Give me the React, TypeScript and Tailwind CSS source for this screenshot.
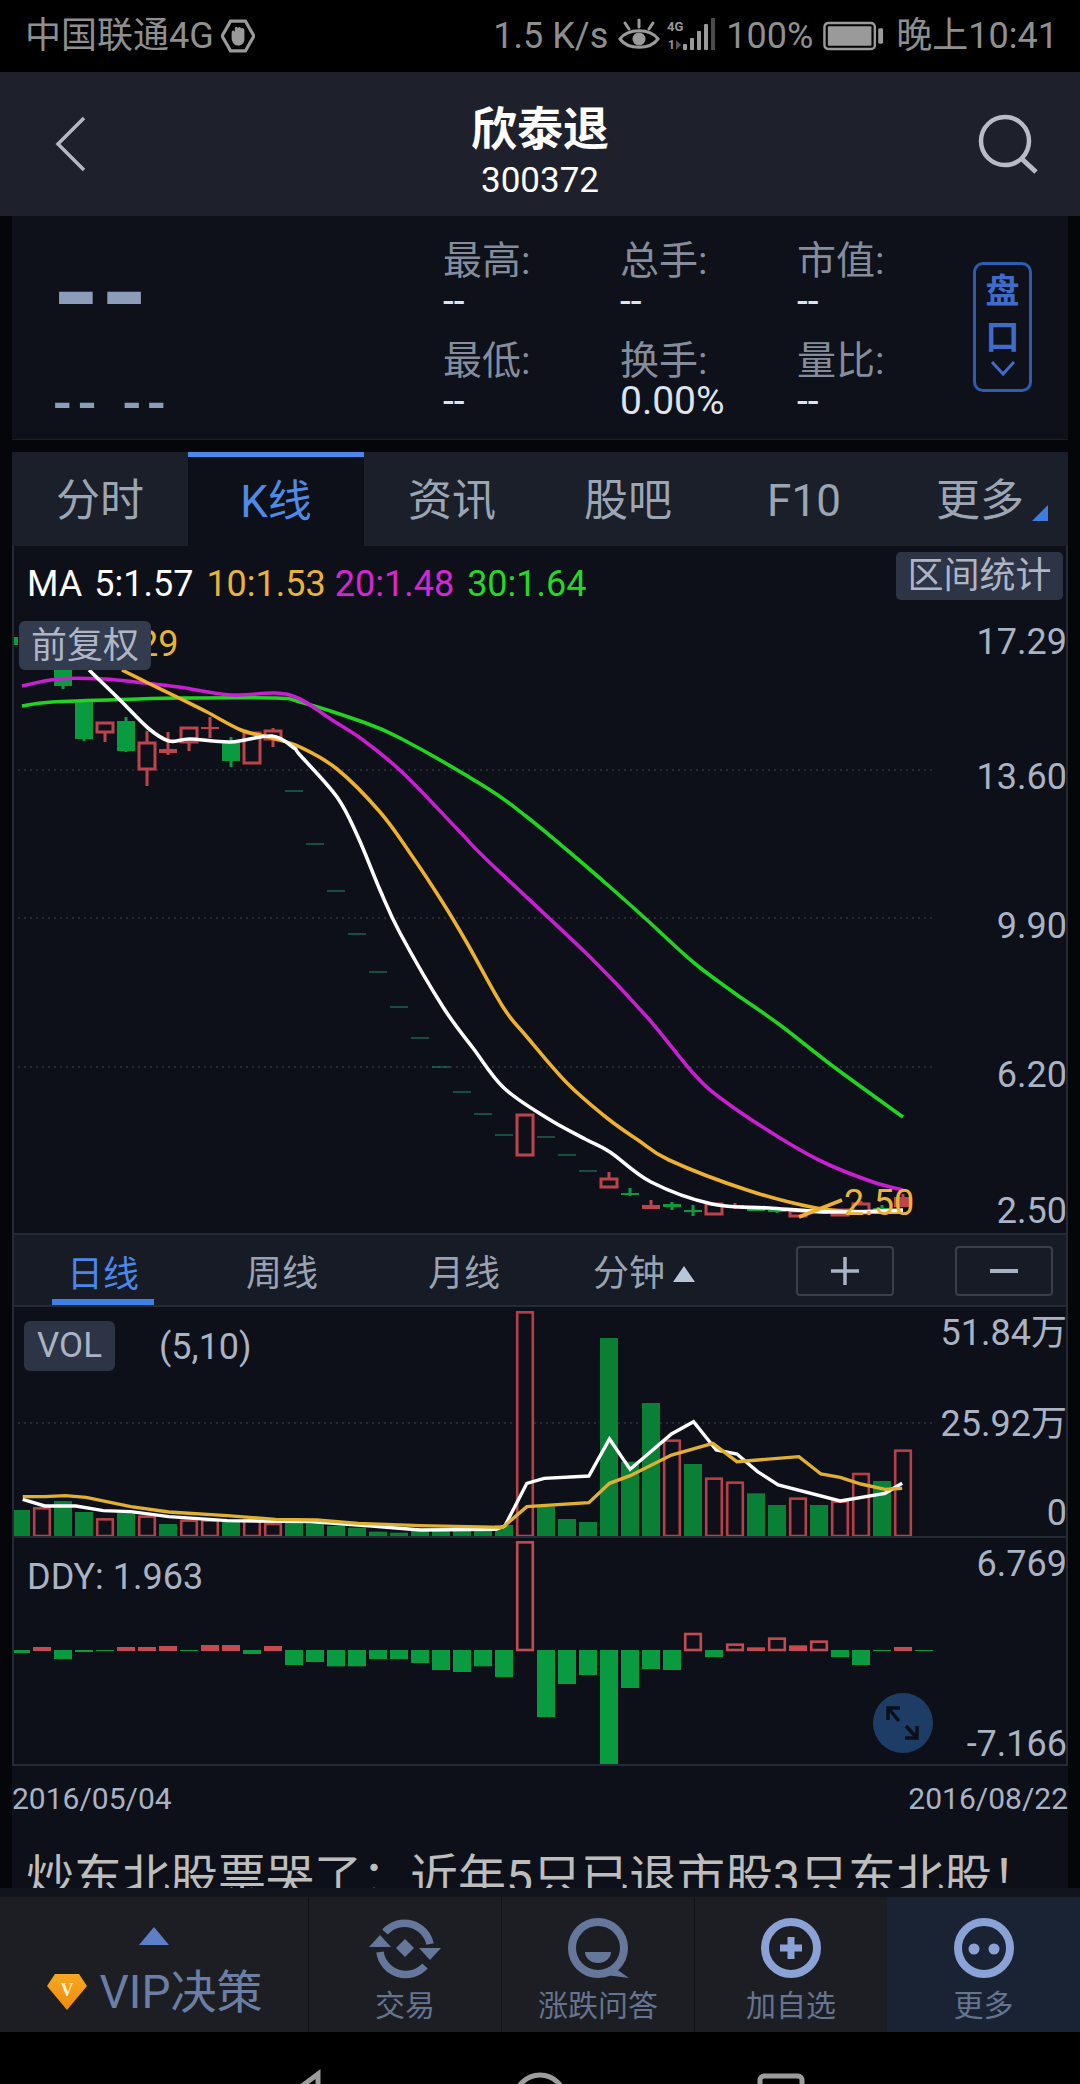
import React from "react";

type Candle = [number, number, number, number, number, "r" | "g", boolean?];

const candles: Candle[] = [
  [63, 670, 686, 670, 689, "g"],
  [84, 702, 739, 702, 741, "g"],
  [105, 723, 732, 723, 742, "r", true],
  [126, 721, 751, 717, 752, "g"],
  [147, 743, 769, 731, 786, "r", true],
  [168, 749, 753, 732, 755, "r"],
  [189, 728, 742, 728, 751, "r", true],
  [210, 727, 729, 717, 738, "r"],
  [231, 742, 761, 737, 767, "g"],
  [252, 733, 763, 733, 763, "r", true],
  [273, 731, 739, 728, 747, "r", true],
  [525, 1115, 1155, 1115, 1155, "r", true],
  [609, 1179, 1187, 1172, 1187, "r", true],
  [630, 1193, 1195, 1188, 1196, "g"],
  [651, 1205, 1209, 1200, 1209, "r"],
  [672, 1204, 1207, 1202, 1210, "g"],
  [693, 1210, 1211, 1205, 1216, "g"],
  [714, 1204, 1214, 1204, 1214, "r", true],
  [735, 1205, 1208, 1203, 1209, "r"],
  [756, 1207, 1211, 1206, 1211, "g"],
  [777, 1210, 1212, 1209, 1213, "g"],
  [798, 1211, 1216, 1211, 1217, "r", true],
  [819, 1210, 1214, 1209, 1214, "g"],
  [840, 1210, 1215, 1210, 1215, "r", true],
  [861, 1204, 1213, 1201, 1213, "r", true],
  [882, 1208, 1210, 1205, 1212, "g"],
  [903, 1197, 1207, 1194, 1207, "r"],
];

const dashes: [number, number][] = [
  [294, 791], [315, 844], [336, 891], [357, 934], [378, 972], [399, 1007], [420, 1038],
  [441, 1067], [462, 1092], [483, 1114], [504, 1135], [546, 1137], [567, 1155], [588, 1171],
];

const white: [number, number][] = [
  [89, 670], [120, 700], [148, 728], [169, 741], [190, 739], [231, 742], [272, 736], [294, 748],
  [300, 755], [337, 797], [358, 837], [380, 890], [400, 933], [443, 1007], [473, 1048], [504, 1088],
  [547, 1118], [585, 1139], [610, 1152], [651, 1182], [712, 1204], [769, 1208], [834, 1212], [903, 1210],
];
const yellow: [number, number][] = [
  [122, 670], [148, 683], [179, 698], [207, 712], [241, 730], [272, 738], [300, 747], [337, 769],
  [380, 812], [410, 853], [443, 903], [467, 943], [503, 1007], [527, 1037], [567, 1083], [607, 1118],
  [638, 1140], [669, 1160], [747, 1190], [816, 1208], [864, 1212], [903, 1212],
];
const magenta: [number, number][] = [
  [22, 686], [58, 679], [103, 679], [145, 683], [179, 687], [231, 695], [275, 693], [300, 699],
  [332, 720], [363, 740], [403, 773], [460, 832], [487, 860], [590, 957], [647, 1017], [693, 1073],
  [723, 1100], [780, 1138], [825, 1163], [873, 1182], [903, 1190],
];
const green: [number, number][] = [
  [22, 706], [52, 702], [138, 699], [179, 698], [275, 698], [300, 702], [357, 720], [400, 738],
  [487, 788], [527, 817], [567, 850], [610, 887], [647, 920], [693, 962], [733, 992], [780, 1025],
  [834, 1067], [903, 1117],
];

function smooth(p: [number, number][]) {
  let d = `M${p[0][0]} ${p[0][1]}`;
  for (let i = 0; i < p.length - 1; i++) {
    const a = p[Math.max(i - 1, 0)];
    const b = p[i];
    const c = p[i + 1];
    const e = p[Math.min(i + 2, p.length - 1)];
    d += ` C${b[0] + (c[0] - a[0]) / 6} ${b[1] + (c[1] - a[1]) / 6} ${c[0] - (e[0] - b[0]) / 6} ${c[1] - (e[1] - b[1]) / 6} ${c[0]} ${c[1]}`;
  }
  return d;
}

const RED = "#bd434c";
const GRN = "#0a9a3f";

function KChart() {
  return (
    <svg viewBox="14 546 1052 687" className="absolute inset-0 h-full w-full">
      {[770, 918, 1067].map((y) => (
        <line key={y} x1="18" x2="933" y1={y} y2={y} stroke="#2f3440" strokeWidth="1.5" strokeDasharray="2 4" />
      ))}
      <rect x="12" y="637" width="6" height="8" fill={GRN} />
      {dashes.map(([x, y]) => (
        <line key={x} x1={x - 9} x2={x + 9} y1={y} y2={y} stroke="#1f7a5c" strokeWidth="1.2" />
      ))}
      {candles.map(([x, t, b, wt, wb, c, hollow]) => {
        const col = c === "r" ? RED : GRN;
        return (
          <g key={x}>
            <line x1={x} x2={x} y1={wt} y2={wb} stroke={col} strokeWidth="3" />
            {hollow ? (
              <rect x={x - 8} y={t} width="16" height={b - t} fill="#0d1018" stroke={col} strokeWidth="3" />
            ) : (
              <rect x={x - 9} y={t} width="18" height={Math.max(b - t, 2)} fill={col} />
            )}
          </g>
        );
      })}
      <path d={smooth(green)} fill="none" stroke="#22d322" strokeWidth="3.6" />
      <path d={smooth(magenta)} fill="none" stroke="#c81fd0" strokeWidth="3.6" />
      <path d={smooth(yellow)} fill="none" stroke="#eeb12f" strokeWidth="3.6" />
      <path d={smooth(white)} fill="none" stroke="#ffffff" strokeWidth="3.6" />
      <line x1="799" y1="1217" x2="842" y2="1200" stroke="#eeb12f" strokeWidth="3.6" />
    </svg>
  );
}

const volTops: [number, "r" | "g"][] = [
  [840, "g"], [835, "r"], [813, "g"], [846, "g"], [868, "r"], [848, "g"], [860, "r"], [882, "g"],
  [872, "r"], [872, "r"], [875, "g"], [870, "r"], [882, "r"], [875, "g"], [880, "g"], [888, "g"],
  [893, "g"], [905, "g"], [908, "g"], [900, "g"], [900, "g"], [900, "g"], [895, "g"], [885, "g"],
  [247, "r"], [830, "g"], [867, "g"], [876, "g"], [324, "g"], [695, "g"], [519, "g"], [632, "r"],
  [702, "g"], [746, "r"], [758, "r"], [790, "g"], [825, "g"], [806, "r"], [825, "g"], [815, "r"],
  [732, "r"], [753, "g"], [662, "r"],
];
const volWhite = [
  [33, 808], [65, 828], [110, 828], [150, 842], [190, 845], [245, 860], [330, 872], [450, 875], [540, 888],
  [610, 900], [720, 898], [733, 888], [765, 760], [790, 745], [855, 738], [885, 627], [915, 718], [975, 612],
  [1007, 575], [1040, 660], [1070, 672], [1100, 725], [1130, 765], [1220, 813], [1285, 790], [1310, 760],
];
const volYellow = [
  [33, 800], [65, 800], [95, 797], [125, 802], [190, 830], [245, 846], [330, 857], [400, 868], [460, 870],
  [520, 880], [610, 887], [730, 892], [765, 830], [855, 818], [885, 760], [915, 737], [975, 675], [1035, 640],
  [1070, 695], [1160, 680], [1192, 732], [1220, 742], [1250, 762], [1285, 778], [1310, 775],
];
const toPts = (a: number[][]) => a.map(([x, y]) => `${x / 1.452},${1230 + y / 3}`).join(" ");

function VolChart() {
  return (
    <svg viewBox="14 1307 1052 229" className="absolute inset-0 h-full w-full">
      <line x1="12" x2="933" y1="1423" y2="1423" stroke="#2f3440" strokeWidth="1.5" strokeDasharray="2 4" />
      {volTops.map(([zy, c], i) => {
        const x = 12 + 21 * i;
        const y = 1230 + zy / 3;
        const h = 1536 - y;
        return c === "g" ? (
          <rect key={i} x={x} y={y} width="18" height={h} fill="#0a8036" />
        ) : (
          <rect key={i} x={x + 1.2} y={y} width="15.6" height={h} fill="#0d1018" stroke="#b63f48" strokeWidth="2.6" />
        );
      })}
      <polyline points={toPts(volWhite)} fill="none" stroke="#ffffff" strokeWidth="3.4" />
      <polyline points={toPts(volYellow)} fill="none" stroke="#e0b030" strokeWidth="3.4" />
    </svg>
  );
}

const ddy: [number, "r" | "g" | "rh"][] = [
  [339, "g"], [321, "r"], [357, "g"], [336, "g"], [333, "g"], [321, "r"], [321, "r"], [318, "r"], [332, "g"],
  [315, "r"], [315, "r"], [342, "g"], [318, "r"], [375, "g"], [366, "g"], [379, "g"], [379, "g"], [357, "g"],
  [357, "g"], [369, "g"], [390, "g"], [396, "g"], [379, "g"], [411, "g"], [7, "rh"], [531, "g"], [432, "g"],
  [405, "g"], [675, "g"], [444, "g"], [387, "g"], [390, "g"], [282, "rh"], [351, "g"], [314, "rh"], [322, "r"],
  [296, "rh"], [316, "r"], [305, "rh"], [351, "g"], [375, "g"], [332, "g"], [321, "r"], [332, "g"],
];

function DdyChart() {
  return (
    <svg viewBox="14 1538 1052 226" className="absolute inset-0 h-full w-full">
      {ddy.map(([zy, c], i) => {
        const x = 12 + 21 * i;
        const y = 1540 + zy / 3;
        if (c === "g") {
          const h = Math.max(y - 1650, 1);
          return <rect key={i} x={x} y={1650} width="18" height={h} fill={GRN} />;
        }
        if (c === "r") {
          return <rect key={i} x={x} y={y} width="18" height={1651 - y} fill="#c44a52" />;
        }
        return <rect key={i} x={x + 1.2} y={y} width="15.6" height={1650 - y} fill="#0d1018" stroke="#c44a52" strokeWidth="2.6" />;
      })}
      <circle cx="903" cy="1723" r="30" fill="#1d3d66" />
      <g stroke="#0b0f17" strokeWidth="3.5" fill="none">
        <path d="M889 1709 L899 1721" />
        <path d="M888 1720 V1708 H900" />
        <path d="M916 1737 L906 1726" />
        <path d="M917 1726 V1738 H905" />
      </g>
    </svg>
  );
}

function StatusIcons() {
  return (
    <svg width="104" height="40" viewBox="0 0 104 40" className="shrink-0">
      <g stroke="#9a9a9a" fill="none" strokeWidth="3">
        <path d="M3 23 C11 12 33 12 41 23 C33 34 11 34 3 23 Z" />
        <path d="M22 4 V11 M8 7 L12 13 M36 7 L32 13" strokeLinecap="round" />
      </g>
      <circle cx="22" cy="23" r="6.5" fill="#9a9a9a" />
      <text x="50" y="15" fill="#9a9a9a" fontSize="13" fontWeight="700" fontFamily="Roboto">4G</text>
      <text x="51" y="33" fill="#9a9a9a" fontSize="12" fontWeight="700" fontFamily="Roboto">1</text>
      <path d="M59 24 L64 29 L59 34 Z" fill="#555" />
      <rect x="66" y="28" width="4" height="6" rx="1" fill="#9a9a9a" />
      <rect x="73" y="22" width="4" height="12" rx="1" fill="#9a9a9a" />
      <rect x="80" y="15" width="4" height="19" rx="1" fill="#9a9a9a" />
      <rect x="87" y="8" width="4" height="26" rx="1" fill="#9a9a9a" />
      <rect x="94" y="2" width="4" height="32" fill="#4a4a4a" />
    </svg>
  );
}

function TradeIcon() {
  return (
    <svg width="76" height="64" viewBox="-38 -32 76 64">
      <g fill="none" stroke="#65779b" strokeWidth="7.5">
        <path d="M-20 -16 A26 26 0 0 1 25 -4" />
        <path d="M20 18 A26 26 0 0 1 -25 4" />
      </g>
      <path d="M14 0 H36 L25 12 Z" fill="#65779b" />
      <path d="M-14 -1 H-36 L-25 -13 Z" fill="#65779b" />
      <path d="M0 -9 L9 0 L0 9 L-9 0 Z" fill="#65779b" />
    </svg>
  );
}
function AskIcon() {
  return (
    <svg width="64" height="64" viewBox="-32 -32 64 64">
      <circle cx="0" cy="0" r="26" fill="none" stroke="#65779b" strokeWidth="8" />
      <path d="M14 18 L31 30 L8 27 Z" fill="#65779b" />
      <path d="M-13 4 H13 A13 11 0 0 1 -13 4 Z" fill="#65779b" />
    </svg>
  );
}
function AddIcon() {
  return (
    <svg width="64" height="64" viewBox="-32 -32 64 64">
      <circle cx="0" cy="0" r="26" fill="none" stroke="#8ba2d6" strokeWidth="8" />
      <path d="M-11 0 H11 M0 -11 V11" stroke="#8ba2d6" strokeWidth="7" />
    </svg>
  );
}
function MoreIcon() {
  return (
    <svg width="64" height="64" viewBox="-32 -32 64 64">
      <circle cx="0" cy="0" r="26" fill="none" stroke="#8ba2d6" strokeWidth="8" />
      <circle cx="-10" cy="1" r="5.5" fill="#8ba2d6" />
      <circle cx="10" cy="1" r="5.5" fill="#8ba2d6" />
    </svg>
  );
}

function InfoCell({ label, value }: { label: string; value: string }) {
  return (
    <div className="flex h-[100px] flex-col">
      <div className="h-[44px] pt-[6px] text-[39px] leading-[38px] text-[#858d9c]">{label}</div>
      <div className="h-[41px] pt-[1px] text-[39px] leading-[40px] text-[#dde3ef]">{value}</div>
    </div>
  );
}

function NavItem({ icon, label, active }: { icon: React.ReactNode; label: string; active?: boolean }) {
  return (
    <div className={active ? "flex h-full w-[193px] flex-col items-center bg-[#1a2333] pt-[19px]" : "flex h-full w-[193px] flex-col items-center border-l border-[#111216] pt-[19px]"}>
      <div className="flex h-[64px] items-center justify-center">{icon}</div>
      <div className="mt-[8px] text-[30px] leading-[36px] text-[#66748f]">{label}</div>
    </div>
  );
}

export default function App() {
  return (
    <div className="flex h-[2084px] w-[1080px] flex-col overflow-hidden bg-[#05060a] font-['Roboto','Noto_Sans_CJK_SC',sans-serif]">
      {/* status bar */}
      <div className="flex h-[72px] shrink-0 items-center justify-between bg-black pl-[25px] pr-[22px] text-[36px] text-[#8f8f8f]">
        <div className="flex items-center gap-[7px]">
          <span>中国联通4G</span>
          <svg width="34" height="34" viewBox="0 0 32 32">
            <path d="M9 2 H23 L31 16 L23 30 H9 L1 16 Z" fill="none" stroke="#9a9a9a" strokeWidth="3" />
            <path d="M10 13 C10 10 13 10 13 13 V9 C13 7 16 7 16 9 C16 7 19 7 19 9.5 C19 8 22 8 22 11 V19 C22 23 19 25 16 25 C13 25 11 23 10 19 Z" fill="#9a9a9a" />
          </svg>
        </div>
        <div className="flex items-center">
          <span className="mr-[9px]">1.5 K/s</span>
          <StatusIcons />
          <span className="ml-[5px] mr-[10px]">100%</span>
          <svg width="62" height="30" viewBox="0 0 64 30" className="mr-[11px]">
            <rect x="1.5" y="1.5" width="52" height="27" rx="4" fill="none" stroke="#9a9a9a" strokeWidth="2.5" />
            <rect x="5" y="5" width="45" height="20" rx="1" fill="#9a9a9a" />
            <rect x="57" y="7" width="5" height="16" rx="1.5" fill="#9a9a9a" />
          </svg>
          <span>晚上10:41</span>
        </div>
      </div>

      {/* header */}
      <div className="relative flex h-[144px] shrink-0 flex-col items-center bg-[#1e212c] pt-[29px]">
        <div className="text-[46px] font-bold leading-[56px] text-white">欣泰退</div>
        <div className="mt-[4px] text-[35px] leading-[40px] text-white">300372</div>
        <svg className="absolute left-[52px] top-[42px]" width="40" height="60" viewBox="0 0 40 60">
          <path d="M32 4 L6 30 L32 56" fill="none" stroke="#b4b8c2" strokeWidth="3.5" />
        </svg>
        <svg className="absolute left-[972px] top-[38px]" width="72" height="70" viewBox="0 0 72 70">
          <circle cx="33" cy="31" r="24" fill="none" stroke="#b8bcc6" strokeWidth="4.5" />
          <path d="M50 49 L64 62" stroke="#b8bcc6" strokeWidth="5" />
        </svg>
      </div>

      <div className="flex shrink-0 flex-col px-[12px]">
        {/* quote info */}
        <div className="relative flex h-[224px] items-start border-b border-[#1c1f29] bg-[#0e1119] pt-[20px]">
          <div className="w-[431px] shrink-0">
            <div className="ml-[42px] mt-[12px] h-[90px] text-[130px] font-medium leading-[90px] tracking-[4px] text-[#8c9db9]">--</div>
            <div className="ml-[41px] mt-[52px] flex h-[26px] gap-[20px] text-[55px] font-medium leading-[26px] tracking-[6px] text-[#8c9db9]">
              <span>--</span>
              <span>--</span>
            </div>
          </div>
          <div className="grid w-[531px] grid-cols-3">
            <InfoCell label="最高:" value="--" />
            <InfoCell label="总手:" value="--" />
            <InfoCell label="市值:" value="--" />
            <InfoCell label="最低:" value="--" />
            <InfoCell label="换手:" value="0.00%" />
            <InfoCell label="量比:" value="--" />
          </div>
          <div className="absolute left-[961px] top-[46px] flex h-[130px] w-[59px] flex-col items-center rounded-[10px] border-[3px] border-[#2f5cb0] pt-[3px]">
            <span className="text-[34px] font-bold leading-[46px] text-[#3f6cc8]">盘</span>
            <span className="text-[34px] font-bold leading-[46px] text-[#3f6cc8]">口</span>
            <svg width="30" height="16" viewBox="0 0 30 16">
              <path d="M4 2 L15 14 L26 2" fill="none" stroke="#3f6cc8" strokeWidth="3" />
            </svg>
          </div>
        </div>

        <div className="h-[12px]" />

        {/* tabs */}
        <div className="grid h-[94px] grid-cols-6 text-[44px] text-[#9ca5b4]">
          <div className="flex items-center justify-center bg-[#1a1f29] pt-[4px]">分时</div>
          <div className="flex items-center justify-center border-t-[5px] border-[#4a87ea] bg-[#0d1018] text-[#4f8ae6]">K线</div>
          <div className="flex items-center justify-center bg-[#1a1f29] pt-[4px]">资讯</div>
          <div className="flex items-center justify-center bg-[#1a1f29] pt-[4px]">股吧</div>
          <div className="flex items-center justify-center bg-[#1a1f29] pt-[4px]">F10</div>
          <div className="relative flex items-center justify-center bg-[#1a1f29] pt-[4px]">
            更多
            <svg className="absolute bottom-[25px] right-[20px]" width="16" height="16" viewBox="0 0 16 16">
              <path d="M16 0 V16 H0 Z" fill="#3d7fe0" />
            </svg>
          </div>
        </div>

        {/* K-line chart */}
        <div className="relative h-[687px] overflow-hidden border-x-2 border-[#262a34] bg-[#0d1018]">
          <KChart />
          <div className="absolute left-[13px] top-[18px] flex gap-[9px] text-[36px] leading-[40px]">
            <span className="mr-[3px] text-white">MA</span>
            <span className="mr-[4px] text-white">5:1.57</span>
            <span className="text-[#e9b338]">10:1.53</span>
            <span className="mr-[4px] text-[#d426d4]">20:1.48</span>
            <span className="text-[#27d627]">30:1.64</span>
          </div>
          <div className="absolute right-[3px] top-[6px] flex h-[48px] w-[167px] items-center justify-center rounded-[5px] bg-[#2d3446] text-[36px] text-[#aeb6c6]">区间统计</div>
          <div className="absolute left-[74px] top-[78px] text-[36px] leading-[40px] text-[#e9b338]">17.29</div>
          <div className="absolute left-[5px] top-[75px] flex h-[49px] w-[132px] items-center justify-center rounded-[6px] bg-[#333b4e] text-[36px] text-[#aeb6c6]">前复权</div>
          <div className="absolute -right-[1px] top-[76px] text-[36px] leading-[40px] text-[#aab3c4]">17.29</div>
          <div className="absolute -right-[1px] top-[211px] text-[36px] leading-[40px] text-[#aab3c4]">13.60</div>
          <div className="absolute -right-[1px] top-[360px] text-[36px] leading-[40px] text-[#aab3c4]">9.90</div>
          <div className="absolute -right-[1px] top-[509px] text-[36px] leading-[40px] text-[#aab3c4]">6.20</div>
          <div className="absolute -right-[1px] top-[645px] text-[36px] leading-[40px] text-[#aab3c4]">2.50</div>
          <div className="absolute left-[830px] top-[637px] text-[36px] leading-[40px] text-[#e9b338]">2.50</div>
        </div>

        {/* period bar */}
        <div className="relative flex h-[74px] items-center border-2 border-y-2 border-[#262a34] bg-[#171b25] text-[36px] text-[#9aa3b3]">
          <div className="absolute bottom-0 left-[38px] flex h-full w-[102px] items-center justify-center border-b-[6px] border-[#3f80e4] pt-[16px] text-[#4a87ea]">日线</div>
          <div className="absolute left-[232px] top-[17px] leading-[44px]">周线</div>
          <div className="absolute left-[414px] top-[17px] leading-[44px]">月线</div>
          <div className="absolute left-[579px] top-[17px] flex items-center gap-[8px] leading-[44px]">
            分钟
            <svg width="22" height="16" viewBox="0 0 22 16">
              <path d="M11 0 L22 16 H0 Z" fill="#b9c5d8" />
            </svg>
          </div>
          <div className="absolute left-[782px] top-[11px] flex h-[50px] w-[98px] items-center justify-center rounded-[4px] border-2 border-[#3a3f4c]">
            <svg width="30" height="30" viewBox="0 0 30 30">
              <path d="M1 15 H29 M15 1 V29" stroke="#aab3c4" strokeWidth="3.5" />
            </svg>
          </div>
          <div className="absolute left-[941px] top-[11px] flex h-[50px] w-[98px] items-center justify-center rounded-[4px] border-2 border-[#3a3f4c]">
            <svg width="30" height="30" viewBox="0 0 30 30">
              <path d="M1 15 H29" stroke="#aab3c4" strokeWidth="4" />
            </svg>
          </div>
        </div>

        {/* volume */}
        <div className="relative h-[229px] overflow-hidden border-x-2 border-[#262a34] bg-[#0d1018]">
          <VolChart />
          <div className="absolute left-[10px] top-[14px] flex h-[50px] w-[91px] items-center justify-center rounded-[6px] bg-[#2d3446] text-[35px] text-[#aab3c4]">VOL</div>
          <div className="absolute left-[145px] top-[20px] text-[36px] leading-[40px] text-[#aab3c4]">(5,10)</div>
          <div className="absolute -right-[1px] top-[6px] text-[36px] leading-[40px] text-[#aab3c4]">51.84万</div>
          <div className="absolute -right-[1px] top-[97px] text-[36px] leading-[40px] text-[#aab3c4]">25.92万</div>
          <div className="absolute -right-[1px] top-[186px] text-[36px] leading-[40px] text-[#aab3c4]">0</div>
        </div>

        {/* DDY */}
        <div className="relative h-[230px] overflow-hidden border-2 border-[#262a34] bg-[#0d1018]">
          <DdyChart />
          <div className="absolute left-[13px] top-[19px] text-[36px] leading-[40px] text-[#aab3c4]">DDY: 1.963</div>
          <div className="absolute -right-[1px] top-[6px] text-[36px] leading-[40px] text-[#aab3c4]">6.769</div>
          <div className="absolute -right-[1px] top-[186px] text-[36px] leading-[40px] text-[#aab3c4]">-7.166</div>
        </div>

        {/* dates */}
        <div className="flex h-[64px] items-center justify-between bg-[#0d1018] text-[30px] text-[#aab3c4]">
          <span>2016/05/04</span>
          <span>2016/08/22</span>
        </div>

        {/* headline */}
        <div className="h-[58px] overflow-hidden bg-[#0d1018] pl-[14px] pt-[20px] text-[48px] leading-[56px] text-[#bdbdbd]">
          <div className="whitespace-nowrap">炒东北股票哭了：近年5只已退市股3只东北股！</div>
        </div>
      </div>

      <div className="h-[9px] shrink-0 bg-[#11141a]" />

      {/* bottom nav */}
      <div className="flex h-[135px] shrink-0 bg-[#1d1e24]">
        <div className="flex h-full w-[308px] flex-col items-center">
          <svg className="mt-[30px]" width="30" height="18" viewBox="0 0 30 18">
            <path d="M15 0 L30 18 H0 Z" fill="#5d7fc6" />
          </svg>
          <div className="mt-[20px] flex items-center gap-[12px]">
            <svg width="42" height="38" viewBox="0 0 42 38">
              <defs>
                <linearGradient id="vipGem" x1="0" y1="0" x2="0" y2="1">
                  <stop offset="0" stopColor="#f7a823" />
                  <stop offset="1" stopColor="#f08a0c" />
                </linearGradient>
              </defs>
              <path d="M9 1 H33 L41 13 L21 37 L1 13 Z" fill="url(#vipGem)" />
              <text x="21" y="23" textAnchor="middle" fontSize="18" fontWeight="700" fill="#fff3d0" fontFamily="Liberation Serif">V</text>
            </svg>
            <span className="text-[46px] leading-[54px] text-[#6b7fa6]">VIP决策</span>
          </div>
        </div>
        <NavItem icon={<TradeIcon />} label="交易" />
        <NavItem icon={<AskIcon />} label="涨跌问答" />
        <NavItem icon={<AddIcon />} label="加自选" />
        <NavItem icon={<MoreIcon />} label="更多" active />
      </div>

      {/* android nav */}
      <div className="h-[52px] shrink-0 bg-black">
        <svg viewBox="0 2032 1080 52" className="block h-[52px] w-[1080px]">
          <g fill="none" stroke="#9c9c9c" strokeWidth="5">
            <path d="M318 2074 L294 2092 L318 2110 Z" />
            <circle cx="540" cy="2100" r="25" />
            <rect x="760" y="2076" width="42" height="42" rx="4" />
          </g>
        </svg>
      </div>
    </div>
  );
}
